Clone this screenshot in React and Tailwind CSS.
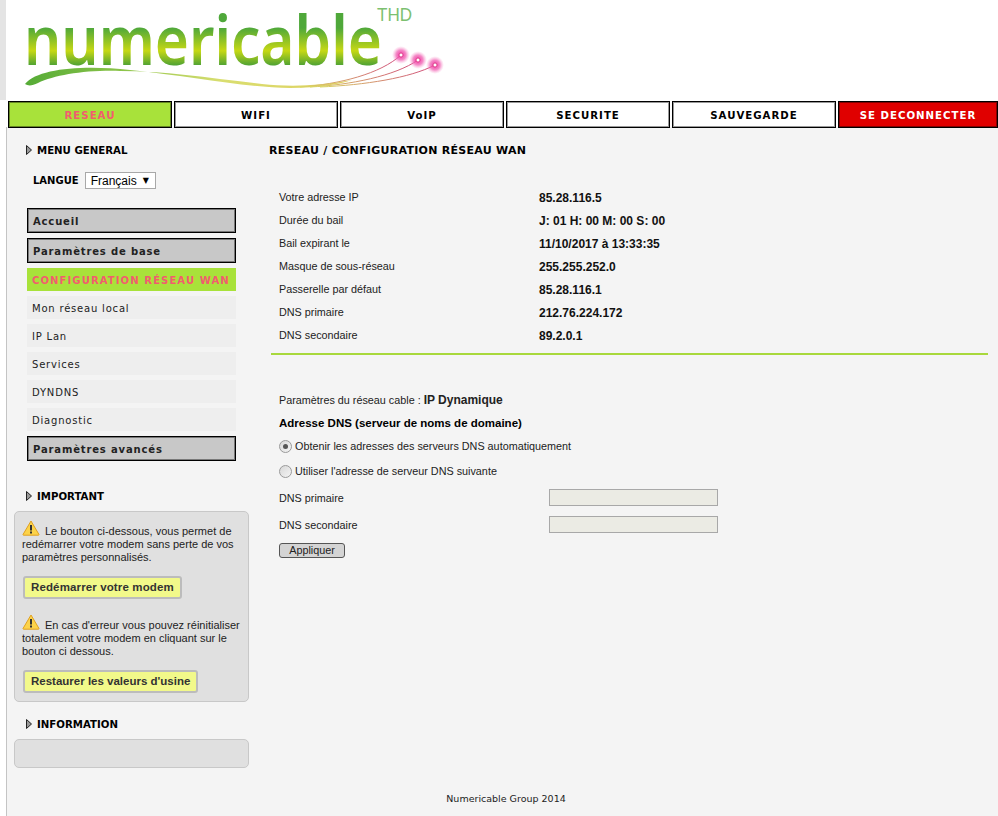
const verdana = "font-['DejaVu_Sans',sans-serif]";
const thickEdge = "border border-black shadow-[inset_0_0_0_1px_rgba(0,0,0,0.4)]";

const navItems = [
  { label: "RESEAU", cls: "bg-[#a8e23a] text-[#f25c6e]", w: "w-[164px]" },
  { label: "WIFI", cls: "bg-white text-black", w: "w-[164px]" },
  { label: "VoIP", cls: "bg-white text-black", w: "w-[164px]" },
  { label: "SECURITE", cls: "bg-white text-black", w: "w-[164px]" },
  { label: "SAUVEGARDE", cls: "bg-white text-black", w: "w-[164px]" },
  { label: "SE DECONNECTER", cls: "bg-[#e00000] text-white", w: "w-[160px]" },
];

const info = [
  ["Votre adresse IP", "85.28.116.5"],
  ["Durée du bail", "J: 01 H: 00 M: 00 S: 00"],
  ["Bail expirant le", "11/10/2017 à 13:33:35"],
  ["Masque de sous-réseau", "255.255.252.0"],
  ["Passerelle par défaut", "85.28.116.1"],
  ["DNS primaire", "212.76.224.172"],
  ["DNS secondaire", "89.2.0.1"],
];

function Logo() {
  return (
    <svg width="440" height="100" viewBox="6 0 440 100" className="block">
      <defs>
        <linearGradient id="lg" gradientUnits="userSpaceOnUse" x1="0" y1="28" x2="0" y2="66">
          <stop offset="0" stopColor="#4fa83a" />
          <stop offset="0.6" stopColor="#c6d814" />
          <stop offset="1" stopColor="#4aa035" />
        </linearGradient>
        <linearGradient id="sw" x1="0" y1="0" x2="1" y2="0">
          <stop offset="0" stopColor="#55ab36" />
          <stop offset="0.3" stopColor="#8cc44a" />
          <stop offset="0.6" stopColor="#d9de70" />
          <stop offset="1" stopColor="#e0d060" />
        </linearGradient>
        <linearGradient id="fib" x1="0" y1="0" x2="1" y2="0">
          <stop offset="0" stopColor="#d8d860" />
          <stop offset="1" stopColor="#d0487c" />
        </linearGradient>
        <radialGradient id="glow">
          <stop offset="0" stopColor="#f0289a" stopOpacity="1" />
          <stop offset="0.55" stopColor="#f05ab0" stopOpacity="0.7" />
          <stop offset="1" stopColor="#f8a0d0" stopOpacity="0" />
        </radialGradient>
      </defs>
      <text
        x="24"
        y="65"
        textLength="358"
        lengthAdjust="spacingAndGlyphs"
        fontFamily="'Noto Sans', sans-serif"
        fontWeight="600"
        fontSize="68"
        fill="url(#lg)"
      >
        numericable
      </text>
      <text x="377" y="21" fontFamily="'Liberation Sans', sans-serif" fontSize="19" fill="#7cc070" textLength="35" lengthAdjust="spacingAndGlyphs">
        THD
      </text>
      <path d="M25 84 C38 68 85 65 130 70 C190 76 240 87 290 88 C320 88 340 84 352 80 C320 86 290 87 262 84 C210 78 165 71 120 71 C85 70 55 75 38 83 C32 86 28 86 25 84 Z" fill="url(#sw)" />
      <path d="M300 87 C340 84 380 74 401 55" fill="none" stroke="url(#fib)" strokeWidth="1" />
      <path d="M310 87 C350 85 395 76 418 60" fill="none" stroke="url(#fib)" strokeWidth="1" />
      <path d="M320 87 C365 85 410 78 435 65" fill="none" stroke="url(#fib)" strokeWidth="1" />
      {[[401, 55], [418, 60], [435, 65]].map(([x, y]) => (
        <g key={x}>
          <circle cx={x} cy={y} r="9" fill="url(#glow)" />
          <circle cx={x} cy={y} r="2" fill="#fff" stroke="#d8307e" strokeWidth="0.8" />
        </g>
      ))}
    </svg>
  );
}

function Arrow() {
  return (
    <svg width="6" height="10" viewBox="0 0 6 10" className="shrink-0">
      <path d="M0.5 0.5 L5.5 5 L0.5 9.5 Z" fill="#999" stroke="#222" strokeWidth="1" />
    </svg>
  );
}

function Warn() {
  return (
    <svg width="18" height="16" viewBox="0 0 18 16" className="inline-block align-[-1px] mr-[5px]">
      <path d="M9 1 L17 14.5 Q17.2 15.2 16.4 15.2 L1.6 15.2 Q0.8 15.2 1 14.5 Z" fill="#fcd34a" stroke="#e0a020" strokeWidth="1" strokeLinejoin="round" />
      <rect x="8" y="5" width="2" height="5.5" fill="#333" />
      <rect x="8" y="11.5" width="2" height="2" fill="#333" />
    </svg>
  );
}

function Heading({ children, className }) {
  return (
    <div className={`flex items-center gap-[5px] pl-[19px] h-[14px] text-[10.2px] font-bold text-black ${verdana} ${className}`}>
      <Arrow />
      <span className="relative top-px">{children}</span>
    </div>
  );
}

function MenuHead({ children }) {
  return (
    <div className={`h-[25px] ${thickEdge} bg-[#c8c8c8] pl-[5px] pt-[2px] flex items-center text-[10px] font-bold tracking-[0.85px] text-[#222] ${verdana}`}>
      {children}
    </div>
  );
}

function SubItem({ children }) {
  return (
    <div className={`h-[23px] bg-[#eeeeee] pl-[5px] pt-[2px] flex items-center text-[10px] tracking-[0.8px] text-[#222] ${verdana}`}>
      {children}
    </div>
  );
}

function YellowButton({ children, className }) {
  return (
    <div className={`inline-block ml-px border-2 border-[#bcbcbc] rounded-[3px] bg-[#f2f98a] px-[6px] h-[23px] leading-[19px] text-[11.5px] font-bold text-[#333] ${className}`}>
      {children}
    </div>
  );
}

function Radio({ checked }) {
  return (
    <span className="w-[13px] h-[13px] rounded-full border border-[#9a9a9a] bg-gradient-to-br from-[#d8d8d8] to-[#f4f4f4] flex items-center justify-center shrink-0">
      {checked && <span className="w-[5px] h-[5px] rounded-full bg-[#555]" />}
    </span>
  );
}

export default function App() {
  return (
    <div className="w-[998px] h-[816px] overflow-hidden bg-white font-['Liberation_Sans',sans-serif] text-[10.8px] text-[#222] relative">
      <div className="h-[100px] flex">
        <div className="w-[6px] bg-[#e4e4e4]" />
        <Logo />
      </div>
      <div className="flex gap-[2px] pl-[8px] h-[27px] mt-px relative z-10">
        {navItems.map((n) => (
          <div key={n.label} className={`${n.w} ${thickEdge} pt-[2px] flex items-center justify-center text-[10.2px] font-bold tracking-[1px] ${verdana} ${n.cls}`}>
            {n.label}
          </div>
        ))}
      </div>
      <div className="ml-[6px] -mt-px h-[689px] border-l border-[#c4c4c4] bg-[#f4f4f4] flex">
        <aside className="w-[255px] shrink-0">
          <Heading className="mt-[16px]">MENU GENERAL</Heading>
          <div className={`flex items-center gap-[6px] ml-[26px] mt-[15px] h-[17px] text-[10px] font-bold text-black ${verdana}`}>
            <span>LANGUE</span>
            <span className="w-[71px] h-[17px] border border-[#a8a8a8] bg-white flex items-center pl-[5px] gap-[6px] font-normal leading-none">
              <span className="font-['Liberation_Sans',sans-serif] text-[12px] text-black">Français</span>
              <span className="text-[8px]">▼</span>
            </span>
          </div>
          <div className="ml-[20px] w-[209px] mt-[19px] flex flex-col gap-[5px]">
            <MenuHead>Accueil</MenuHead>
            <MenuHead>Paramètres de base</MenuHead>
            <div className={`h-[23px] bg-[#a8e23a] pl-[5px] pt-[2px] flex items-center text-[10px] font-bold tracking-[1.12px] text-[#f25c6e] ${verdana}`}>
              CONFIGURATION RÉSEAU WAN
            </div>
            <SubItem>Mon réseau local</SubItem>
            <SubItem>IP Lan</SubItem>
            <SubItem>Services</SubItem>
            <SubItem>DYNDNS</SubItem>
            <SubItem>Diagnostic</SubItem>
            <MenuHead>Paramètres avancés</MenuHead>
          </div>
          <Heading className="mt-[28px]">IMPORTANT</Heading>
          <div className="ml-[7px] w-[235px] h-[191px] mt-[8px] border border-[#c8c8c8] rounded-[5px] bg-[#e0e0e0] pl-[7px] pr-[6px] pt-[8px] leading-[13px] text-[11px]">
            <p><Warn />Le bouton ci-dessous, vous permet de redémarrer votre modem sans perte de vos paramètres personnalisés.</p>
            <div className="mt-[12px]"><YellowButton className="tracking-[0.13px]">Redémarrer votre modem</YellowButton></div>
            <p className="mt-[15px]"><Warn />En cas d'erreur vous pouvez réinitialiser totalement votre modem en cliquant sur le bouton ci dessous.</p>
            <div className="mt-[12px]"><YellowButton>Restaurer les valeurs d'usine</YellowButton></div>
          </div>
          <Heading className="mt-[15px]">INFORMATION</Heading>
          <div className="ml-[7px] w-[235px] h-[29px] mt-[8px] border border-[#c8c8c8] rounded-[5px] bg-[#e0e0e0]" />
        </aside>
        <main className="flex-1">
          <div className={`ml-[7px] mt-[17px] h-[14px] flex items-center text-[11px] font-bold tracking-[0.27px] text-black ${verdana}`}>
            RESEAU / CONFIGURATION RÉSEAU WAN
          </div>
          <div className="ml-[17px] mt-[28px] flex flex-col">
            {info.map(([k, v]) => (
              <div key={k} className="flex h-[23px] items-center">
                <span className="w-[260px]">{k}</span>
                <span className="font-bold text-[12px] text-[#111]">{v}</span>
              </div>
            ))}
          </div>
          <div className="ml-[9px] mr-[10px] mt-[6px] h-[2px] bg-[#a8d83c]" />
          <div className="ml-[17px]">
            <div className="mt-[37px] h-[16px] flex items-center">
              <span>Paramètres du réseau cable :&nbsp;</span><b className="text-[12px]">IP Dynamique</b>
            </div>
            <div className="mt-[8px] h-[16px] flex items-center font-bold text-[11.5px] text-black">
              Adresse DNS (serveur de noms de domaine)
            </div>
            <div className="mt-[6px] h-[16px] flex items-center gap-[3px]"><Radio checked /><span>Obtenir les adresses des serveurs DNS automatiquement</span></div>
            <div className="mt-[9px] h-[16px] flex items-center gap-[3px]"><Radio /><span>Utiliser l'adresse de serveur DNS suivante</span></div>
            <div className="mt-[10px] h-[17px] flex items-center">
              <span className="w-[270px] pt-[2px]">DNS primaire</span>
              <span className="w-[169px] h-[17px] border border-[#a8a8a8] bg-[#ebebe4]" />
            </div>
            <div className="mt-[10px] h-[17px] flex items-center">
              <span className="w-[270px] pt-[2px]">DNS secondaire</span>
              <span className="w-[169px] h-[17px] border border-[#a8a8a8] bg-[#ebebe4]" />
            </div>
            <div className="mt-[10px] w-[66px] h-[15px] border border-[#555] rounded-[3px] bg-[#d4d4d4] flex items-center justify-center leading-none">
              Appliquer
            </div>
          </div>
        </main>
      </div>
      <div className={`absolute left-[14px] right-0 bottom-[10px] text-center text-[9.5px] text-[#222] ${verdana}`}>
        Numericable Group 2014
      </div>
    </div>
  );
}
